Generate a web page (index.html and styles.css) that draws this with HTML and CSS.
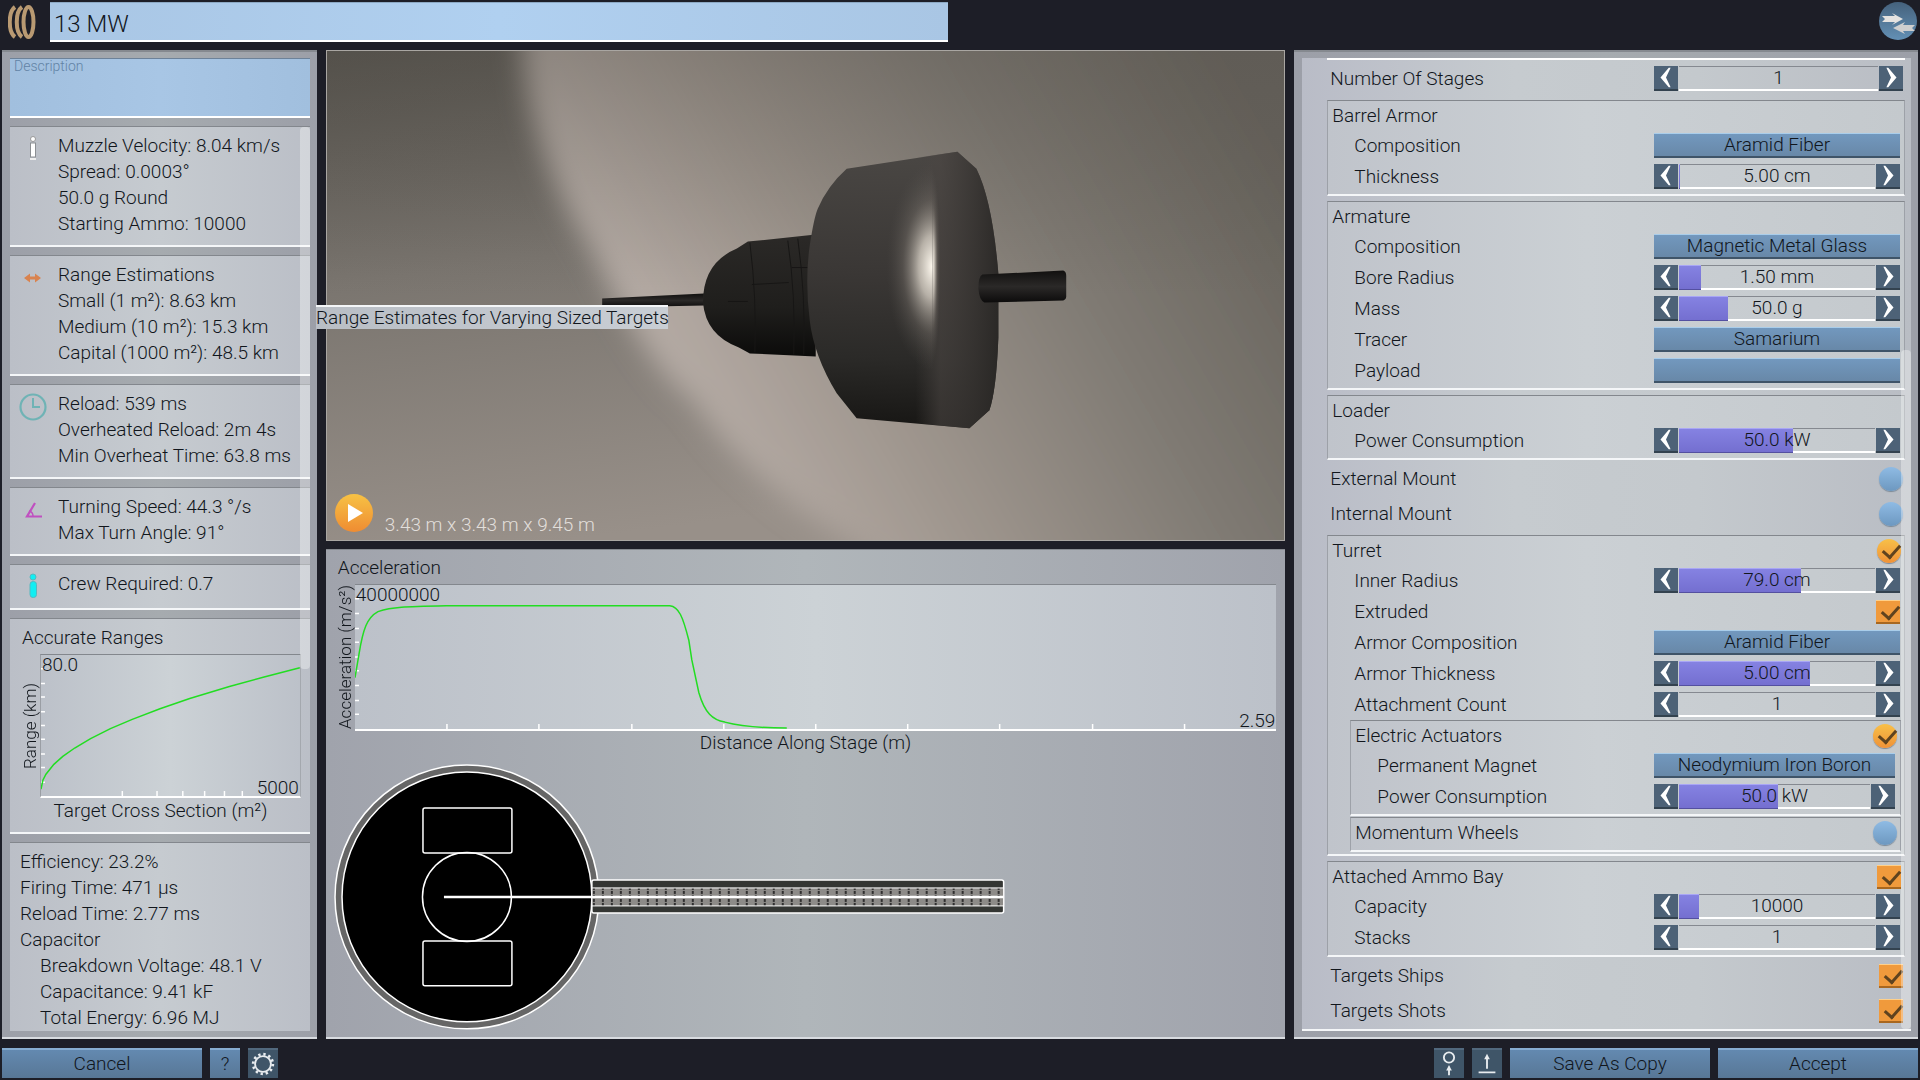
FILE: index.html
```
<!DOCTYPE html>
<html lang="en">
<head>
  <meta charset="utf-8">
  <title>Module Editor</title>
  <link rel="stylesheet" href="styles.css">
</head>
<body>
  <svg width="0" height="0" class="defs" aria-hidden="true">
    <symbol id="prev" viewBox="0 0 24 25"><path d="M15 2 H17 L12 12.500 L17 23 H15 L6 12.500 Z" fill="#fff"/></symbol>
    <symbol id="next" viewBox="0 0 24 25"><path d="M9 2 H7 L12 12.500 L7 23 H9 L18 12.500 Z" fill="#fff"/></symbol>
  </svg>

  <header class="topbar">
    <svg class="logo" viewBox="0 0 28 36" fill="none" stroke="#b99a72">
      <path d="M7 3 C0 8 0 28 7 33" stroke-width="4"/>
      <path d="M14 3 C7 8 7 28 14 33" stroke-width="4"/>
      <ellipse cx="20.500" cy="18" rx="5" ry="15" stroke-width="4"/>
    </svg>
    <input class="name" type="text" value="13 MW" aria-label="Name">
    <button class="swap" aria-label="Swap">
      <svg viewBox="0 0 38 38">
        <path d="M3 14 H16 L13 11 L24 17 L13 23 L16 20 H3 L6 17 Z" fill="#e4e2e0"/>
        <path d="M36 23 H24 L26 20 L14 26 L26 32 L24 29 H36 L33 26 Z" fill="#cfcfcf"/>
      </svg>
    </button>
  </header>

  <main>
    <section class="panel stats">
      <textarea class="description" placeholder="Description" aria-label="Description"></textarea>

      <div class="card">
        <svg class="icon" viewBox="0 0 32 32"><circle cx="17" cy="7" r="2.500" fill="#fff" stroke="#999"/><rect x="14.500" y="11" width="5" height="14" fill="#fff" stroke="#8c8f93"/><path d="M14 27 h6" stroke="#eee" stroke-width="2"/></svg>
        <div>
          <p>Muzzle Velocity: 8.04 km/s</p>
          <p>Spread: 0.0003°</p>
          <p>50.0 g Round</p>
          <p>Starting Ammo: 10000</p>
        </div>
      </div>

      <div class="card">
        <svg class="icon" viewBox="0 0 32 32"><path d="M8 17 L14 12.500 V15.500 H19 V12.500 L25 17 L19 21.500 V18.500 H14 V21.500 Z" fill="#d9834f"/></svg>
        <div>
          <p>Range Estimations</p>
          <p>Small (1 m²): 8.63 km</p>
          <p>Medium (10 m²): 15.3 km</p>
          <p>Capital (1000 m²): 48.5 km</p>
        </div>
        <div class="tooltip" role="tooltip">Range Estimates for Varying Sized Targets</div>
      </div>

      <div class="card">
        <svg class="icon" viewBox="0 0 32 32" fill="none" stroke="#6fb3b5"><circle cx="17" cy="17" r="12.500" stroke-width="2.200"/><path d="M17 8 V17 H24" stroke-width="2"/></svg>
        <div>
          <p>Reload: 539 ms</p>
          <p>Overheated Reload: 2m 4s</p>
          <p>Min Overheat Time: 63.8 ms</p>
        </div>
      </div>

      <div class="card">
        <svg class="icon" viewBox="0 0 32 32" fill="none" stroke="#c050c0"><path d="M19 10 L11 23.500 H26" stroke-width="2.200"/><path d="M13 18 Q17 19 17 23" stroke-width="1.500"/></svg>
        <div>
          <p>Turning Speed: 44.3 °/s</p>
          <p>Max Turn Angle: 91°</p>
        </div>
      </div>

      <div class="card">
        <svg class="icon" viewBox="0 0 32 32" fill="#12eef2" stroke="#55b9c0"><circle cx="17" cy="7" r="3"/><rect x="14" y="11.500" width="6.500" height="16" rx="3"/></svg>
        <div>
          <p>Crew Required: 0.7</p>
        </div>
      </div>

      <div class="card chart-card">
        <h2>Accurate Ranges</h2>
        <div class="chart">
          <span class="y-label">Range (km)</span>
          <div class="plot small">
            <svg viewBox="0 0 261 144" preserveAspectRatio="none">
              <path class="tick" d="M0 14H4 M0 29H4 M0 43H4 M0 58H4 M0 72H4 M0 86H4 M0 101H4 M0 115H4 M0 130H4"/>
              <path class="tick" d="M82 139V144 M117 139V144 M143 139V144 M165 139V144 M185 139V144 M203 139V144"/>
              <polyline class="curve" points="0,137 2,127.600 5,121.800 13,111.700 22,103.600 34,95 50,85.400 70,75.200 92,65.700 120,54.900 150,44.500 190,32.200 225,22.400 261,13"/>
            </svg>
            <span class="max-y">80.0</span>
            <span class="max-x">5000</span>
          </div>
        </div>
        <p class="x-label">Target Cross Section (m²)</p>
      </div>

      <div class="card details">
        <div>
          <p>Efficiency: 23.2%</p>
          <p>Firing Time: 471 µs</p>
          <p>Reload Time: 2.77 ms</p>
          <p>Capacitor</p>
          <p class="sub">Breakdown Voltage: 48.1 V</p>
          <p class="sub">Capacitance: 9.41 kF</p>
          <p class="sub">Total Energy: 6.96 MJ</p>
        </div>
      </div>
      <div class="scrollbar"></div>
    </section>

    <div class="center">
      <section class="view">
        <svg class="scene" viewBox="0 0 960 490" preserveAspectRatio="xMidYMid slice">
          <defs>
            <linearGradient id="wall" x1="0" y1="0" x2="0.250" y2="1">
              <stop offset="0" stop-color="#54514b"/>
              <stop offset="0.450" stop-color="#7a756f"/>
              <stop offset="1" stop-color="#989089"/>
            </linearGradient>
            <linearGradient id="lit" gradientUnits="userSpaceOnUse" x1="330" y1="380" x2="920" y2="40">
              <stop offset="0" stop-color="#bab0aa"/>
              <stop offset="0.300" stop-color="#a0978f"/>
              <stop offset="0.650" stop-color="#7f7a73"/>
              <stop offset="1" stop-color="#66625b"/>
            </linearGradient>
            <linearGradient id="topshade" x1="0" y1="0" x2="0" y2="1">
              <stop offset="0" stop-color="#55514b" stop-opacity="0.350"/>
              <stop offset="0.500" stop-color="#55514b" stop-opacity="0"/>
            </linearGradient>
            <linearGradient id="drum" gradientUnits="userSpaceOnUse" x1="580" y1="100" x2="570" y2="378">
              <stop offset="0" stop-color="#4a4744"/>
              <stop offset="0.450" stop-color="#3a3735"/>
              <stop offset="0.750" stop-color="#2b2a28"/>
              <stop offset="1" stop-color="#171614"/>
            </linearGradient>
            <linearGradient id="rim" gradientUnits="userSpaceOnUse" x1="590" y1="0" x2="674" y2="0">
              <stop offset="0" stop-color="#4a4542" stop-opacity="0"/>
              <stop offset="0.300" stop-color="#4a4542" stop-opacity="0.600"/>
              <stop offset="1" stop-color="#292725" stop-opacity="0.900"/>
            </linearGradient>
            <linearGradient id="neck" x1="0" y1="0" x2="0" y2="1">
              <stop offset="0" stop-color="#2b2927"/>
              <stop offset="0.600" stop-color="#1f1e1c"/>
              <stop offset="1" stop-color="#0b0b0a"/>
            </linearGradient>
            <linearGradient id="stub" x1="0" y1="0" x2="0" y2="1">
              <stop offset="0" stop-color="#11100f"/>
              <stop offset="0.500" stop-color="#2b2928"/>
              <stop offset="1" stop-color="#0c0b0b"/>
            </linearGradient>
            <radialGradient id="shine">
              <stop offset="0" stop-color="#fffaf0"/>
              <stop offset="0.300" stop-color="#d5cec3" stop-opacity="0.800"/>
              <stop offset="0.650" stop-color="#8a837b" stop-opacity="0.300"/>
              <stop offset="1" stop-color="#5a5652" stop-opacity="0"/>
            </radialGradient>
            <filter id="soft"><feGaussianBlur stdDeviation="14"/></filter>
            <clipPath id="left-of-edge"><rect x="480" y="90" width="127" height="300"/></clipPath>
            <clipPath id="right-of-edge"><rect x="607" y="90" width="60" height="300"/></clipPath>
          </defs>
          <rect width="960" height="490" fill="url(#wall)"/>
          <path d="M190 -50 L196 0 C202 90 245 170 262 194 C300 275 345 340 364 347 C420 430 490 470 535 500 L600 560 H1020 V-50 Z" fill="url(#lit)" filter="url(#soft)"/>
          <rect width="960" height="490" fill="url(#topshade)"/>
          <path d="M276 248 L378 243 V255 L276 257 Z" fill="url(#stub)"/>
          <path d="M490 184 L422 191 L411 198 Q377 212 377 252 Q380 285 413 297 L424 303 L490 306 Z" fill="url(#neck)"/>
          <path d="M424 192 Q431 248 429 302 M462 190 Q470 245 468 304 M472 188 Q480 245 478 304 M426 234 L463 232 M402 251 H422 M466 217 H482" fill="none" stroke="#171615" stroke-width="1"/>
          <path d="M484 195 Q488 168 492 158 Q502 135 521 118 L632 101 L651 118 Q667 150 673 223 V287 Q671 340 664 360 L644 378 L531 368 L511 343 Q488 305 484 270 Q479 230 484 195 Z" fill="url(#drum)"/>
          <path d="M590 107 L632 101 L651 118 Q667 150 673 223 V287 Q671 340 664 360 L644 378 L590 373 Z" fill="url(#rim)"/>
          <ellipse cx="607" cy="216" rx="46" ry="104" fill="url(#shine)" clip-path="url(#left-of-edge)"/>
          <ellipse cx="607" cy="216" rx="8" ry="98" fill="url(#shine)" clip-path="url(#right-of-edge)"/>
          <path d="M657 224 L738 220 Q741 221 741 225 V246 Q741 249 738 250 L659 252 Q654 250 653 238 Q653 226 657 224 Z" fill="url(#stub)"/>
        </svg>
        <div class="view-bar">
          <button class="play" aria-label="Play"><svg viewBox="0 0 38 38"><path d="M13 10 L28 19 L13 28 Z" fill="#fff"/></svg></button>
          <span>3.43 m x 3.43 m x 9.45 m</span>
        </div>
      </section>

      <section class="panel graph">
        <h2>Acceleration</h2>
        <div class="chart">
          <span class="y-label">Acceleration (m/s²)</span>
          <div class="plot">
            <svg viewBox="0 0 922 146" preserveAspectRatio="none">
              <path class="tick" d="M0 14H4 M0 29H4 M0 44H4 M0 58H4 M0 73H4 M0 87H4 M0 102H4 M0 117H4 M0 131H4"/>
              <path class="tick" d="M92 141V146 M184 141V146 M277 141V146 M369 141V146 M461 141V146 M553 141V146 M645 141V146 M738 141V146 M830 141V146"/>
              <path class="curve" d="M0 94 L4 70 C8 45 12 33 23 27 C38 22 50 22 98 21 L315 21 C324 22 328 32 334 56 L337 76 L344 109 C350 130 358 137 370 139 C385 143 400 145 432 145"/>
            </svg>
            <span class="max-y">40000000</span>
            <span class="max-x">2.59</span>
          </div>
        </div>
        <p class="x-label">Distance Along Stage (m)</p>
        <svg class="schematic" viewBox="0 0 960 276">
          <defs>
            <pattern id="coils" width="9" height="8" patternUnits="userSpaceOnUse">
              <rect width="9" height="8" fill="#8d8b88"/>
              <path d="M7 0V8" stroke="#111" stroke-width="1.500" stroke-dasharray="3 1"/>
            </pattern>
          </defs>
          <circle cx="141" cy="138" r="132" fill="#666" stroke="#fff" stroke-width="1.500"/>
          <circle cx="141" cy="138" r="125" fill="#000" stroke="#fff" stroke-width="1.500"/>
          <g fill="none" stroke="#fff" stroke-width="1.500">
            <circle cx="141" cy="138" r="44.500"/>
            <rect x="97" y="49" width="89" height="45" rx="2"/>
            <rect x="97" y="182" width="89" height="45" rx="2"/>
          </g>
          <rect x="266" y="121" width="412" height="33" rx="2" fill="#343633" stroke="#fff" stroke-width="1.500"/>
          <rect x="266" y="129" width="412" height="18" fill="url(#coils)" stroke="#fff"/>
          <path d="M118 138 H678" stroke="#fff" stroke-width="2.500"/>
        </svg>
      </section>
    </div>

    <section class="panel options">
      <div class="sheet">
        <div class="list">
          <div class="row tall top">
            <label for="stages">Number Of Stages</label>
            <div class="spin"><button aria-label="Less"><svg><use href="#prev"/></svg></button><div class="track"><input id="stages" value="1"></div><button aria-label="More"><svg><use href="#next"/></svg></button></div>
          </div>

          <div class="group">
            <h3>Barrel Armor</h3>
            <div class="row"><span>Composition</span><button class="pick">Aramid Fiber</button></div>
            <div class="row">
              <label for="thickness">Thickness</label>
              <div class="spin"><button aria-label="Less"><svg><use href="#prev"/></svg></button><div class="track"><div class="fill" style="width: 0.5%"></div><input id="thickness" value="5.00 cm"></div><button aria-label="More"><svg><use href="#next"/></svg></button></div>
            </div>
          </div>

          <div class="group">
            <h3>Armature</h3>
            <div class="row"><span>Composition</span><button class="pick">Magnetic Metal Glass</button></div>
            <div class="row">
              <label for="bore">Bore Radius</label>
              <div class="spin"><button aria-label="Less"><svg><use href="#prev"/></svg></button><div class="track"><div class="fill" style="width: 11%"></div><input id="bore" value="1.50 mm"></div><button aria-label="More"><svg><use href="#next"/></svg></button></div>
            </div>
            <div class="row">
              <label for="mass">Mass</label>
              <div class="spin"><button aria-label="Less"><svg><use href="#prev"/></svg></button><div class="track"><div class="fill" style="width: 25%"></div><input id="mass" value="50.0 g"></div><button aria-label="More"><svg><use href="#next"/></svg></button></div>
            </div>
            <div class="row"><span>Tracer</span><button class="pick">Samarium</button></div>
            <div class="row"><span>Payload</span><button class="pick" aria-label="Payload"></button></div>
          </div>

          <div class="group">
            <h3>Loader</h3>
            <div class="row">
              <label for="loader">Power Consumption</label>
              <div class="spin"><button aria-label="Less"><svg><use href="#prev"/></svg></button><div class="track"><div class="fill" style="width: 58%"></div><input id="loader" value="50.0 kW"></div><button aria-label="More"><svg><use href="#next"/></svg></button></div>
            </div>
          </div>

          <div class="mounts">
            <div class="row tall"><label for="external">External Mount</label><input id="external" type="radio" name="mount"></div>
            <div class="row tall"><label for="internal">Internal Mount</label><input id="internal" type="radio" name="mount"></div>
          </div>

          <div class="group">
            <div class="head"><label for="turret">Turret</label><input id="turret" type="radio" name="mount" checked></div>
            <div class="row">
              <label for="inner">Inner Radius</label>
              <div class="spin"><button aria-label="Less"><svg><use href="#prev"/></svg></button><div class="track"><div class="fill" style="width: 62%"></div><input id="inner" value="79.0 cm"></div><button aria-label="More"><svg><use href="#next"/></svg></button></div>
            </div>
            <div class="row"><label for="extruded">Extruded</label><input id="extruded" type="checkbox" checked></div>
            <div class="row"><span>Armor Composition</span><button class="pick">Aramid Fiber</button></div>
            <div class="row">
              <label for="armor">Armor Thickness</label>
              <div class="spin"><button aria-label="Less"><svg><use href="#prev"/></svg></button><div class="track"><div class="fill" style="width: 67%"></div><input id="armor" value="5.00 cm"></div><button aria-label="More"><svg><use href="#next"/></svg></button></div>
            </div>
            <div class="row">
              <label for="attach">Attachment Count</label>
              <div class="spin"><button aria-label="Less"><svg><use href="#prev"/></svg></button><div class="track"><input id="attach" value="1"></div><button aria-label="More"><svg><use href="#next"/></svg></button></div>
            </div>

            <div class="group nested">
              <div class="head"><label for="electric">Electric Actuators</label><input id="electric" type="radio" name="drive" checked></div>
              <div class="row"><span>Permanent Magnet</span><button class="pick">Neodymium Iron Boron</button></div>
              <div class="row">
                <label for="actuator">Power Consumption</label>
                <div class="spin"><button aria-label="Less"><svg><use href="#prev"/></svg></button><div class="track"><div class="fill" style="width: 52%"></div><input id="actuator" value="50.0 kW"></div><button aria-label="More"><svg><use href="#next"/></svg></button></div>
              </div>
            </div>
            <div class="group nested">
              <div class="head"><label for="wheels">Momentum Wheels</label><input id="wheels" type="radio" name="drive"></div>
            </div>
          </div>

          <div class="group">
            <div class="head"><label for="ammo">Attached Ammo Bay</label><input id="ammo" type="checkbox" checked></div>
            <div class="row">
              <label for="capacity">Capacity</label>
              <div class="spin"><button aria-label="Less"><svg><use href="#prev"/></svg></button><div class="track"><div class="fill" style="width: 10%"></div><input id="capacity" value="10000"></div><button aria-label="More"><svg><use href="#next"/></svg></button></div>
            </div>
            <div class="row">
              <label for="stacks">Stacks</label>
              <div class="spin"><button aria-label="Less"><svg><use href="#prev"/></svg></button><div class="track"><input id="stacks" value="1"></div><button aria-label="More"><svg><use href="#next"/></svg></button></div>
            </div>
          </div>

          <div class="targets">
            <div class="row tall"><label for="ships">Targets Ships</label><input id="ships" type="checkbox" checked></div>
            <div class="row tall"><label for="shots">Targets Shots</label><input id="shots" type="checkbox" checked></div>
          </div>
        </div>
        <div class="scrollbar"></div>
      </div>
    </section>
  </main>

  <footer>
    <button class="cancel">Cancel</button>
    <button class="square">?</button>
    <button class="square dark" aria-label="Settings">
      <svg viewBox="0 0 30 30" fill="none" stroke="#e8ecef">
        <circle cx="15" cy="15" r="8.500" stroke-width="2"/>
        <circle cx="15" cy="15" r="10.500" stroke-width="3" stroke-dasharray="2.500 3"/>
      </svg>
    </button>
    <span class="spacer"></span>
    <button class="square dark" aria-label="Attach">
      <svg viewBox="0 0 30 30" fill="none" stroke="#e8ecef" stroke-width="2"><circle cx="15" cy="8" r="5.500"/><path d="M15 27 V18"/><path d="M12 22 L15 16 L18 22 Z" fill="#e8ecef" stroke="none"/></svg>
    </button>
    <button class="square dark" aria-label="Export">
      <svg viewBox="0 0 30 30" fill="none" stroke="#e8ecef" stroke-width="2"><path d="M15 20 V8 M6 24 H24"/><path d="M12 10 L15 4 L18 10 Z" fill="#e8ecef" stroke="none"/></svg>
    </button>
    <button class="copy">Save As Copy</button>
    <button class="accept">Accept</button>
  </footer>
</body>
</html>
```
FILE: styles.css
```
* { box-sizing: border-box; }
body {
  margin: 0;
  min-height: 100vh;
  display: flex;
  flex-direction: column;
  background: #1d1e27;
  color: #11161c;
  font: 300 19px/26px Roboto, sans-serif;
}
button, input, textarea { font: inherit; color: inherit; margin: 0; padding: 0; border: 0; border-radius: 0; }
button { cursor: pointer; }
h2, h3, p { margin: 0; font-size: inherit; font-weight: inherit; }
.defs { position: absolute; }

/* top bar */
.topbar { display: flex; align-items: flex-start; height: 50px; padding-top: 2px; }
.logo { width: 28px; height: 36px; margin: 2px 14px 0 8px; }
.name {
  width: 898px;
  height: 40px;
  padding: 4px 0 0 4px;
  font-size: 24px;
  background: linear-gradient(to right, #a9c6e4, #b0d0f0 50%, #a9c6e4);
  border-top: 1px solid #8da9c4;
  border-bottom: 2px solid #fff;
}
.swap {
  width: 38px;
  height: 38px;
  margin-left: auto;
  margin-right: 3px;
  border-radius: 50%;
  background: linear-gradient(#45617c, #6390b5);
}
.swap svg { display: block; }

/* columns */
main {
  flex: 1;
  display: grid;
  grid-template-columns: 315fr 960fr 624fr;
  column-gap: 9px;
  padding: 0 2px;
}
.panel {
  border-top: 2px solid #85898f;
  border-bottom: 2px solid #d8dbe0;
  background: linear-gradient(to right, #9c9fa8, #a6abaf 50%, #9c9fa8);
}
.scrollbar { position: absolute; width: 10px; background: rgba(255, 255, 255, 0.35); border-radius: 4px; }

/* left column */
.stats {
  position: relative;
  display: flex;
  flex-direction: column;
  gap: 8px;
  padding: 6px 7px 6px 8px;
}
.stats .scrollbar { right: 7px; top: 75px; height: 542px; }
.description {
  height: 60px;
  padding: 0 4px;
  resize: none;
  font-size: 14px;
  line-height: 14px;
  background: linear-gradient(to right, #a1bfde, #a8c6e5 50%, #a1bfde);
  border-top: 1px solid #6d8299;
  border-bottom: 2px solid #fff;
}
.description::placeholder { color: #6283a5; }
.card {
  position: relative;
  display: flex;
  min-height: 46px;
  padding: 6px 4px 8px 6px;
  background: linear-gradient(to right, #bbbfc7, #c6cbd0 50%, #bbbfc7);
  border-top: 1px solid #83878d;
  border-bottom: 2px solid #f4f6f8;
}
.icon { width: 32px; height: 32px; margin: -1px 10px -4px 0; }
.tooltip {
  position: absolute;
  z-index: 2;
  left: 306px;
  top: 49px;
  height: 24px;
  width: 352px;
  line-height: 22px;
  white-space: nowrap;
  background: linear-gradient(to right, #b9bec5, #c9ced4);
  border-top: 2px solid #f4f6f8;
}
.chart-card { flex-direction: column; padding: 6px 9px 8px 10px; }
.chart-card h2 { padding: 0 2px 3px; }
.chart { display: flex; }
.y-label {
  width: 20px;
  font-size: 17px;
  line-height: 20px;
  text-align: center;
  white-space: nowrap;
  writing-mode: vertical-rl;
  transform: rotate(180deg);
}
.plot {
  position: relative;
  flex: 1;
  height: 147px;
  line-height: 20px;
  border-top: 1px solid #83878d;
  border-bottom: 2px solid #fff;
  background: linear-gradient(to right, #bcc1c9, #ccd2d6 50%, #bcc1c9);
}
.plot.small { height: 144px; border-left: 1px solid #9a9ea4; border-right: 1px solid #a4a8ae; }
.plot svg { display: block; width: 100%; height: 100%; }
.tick { stroke: #fff; stroke-width: 1.5; fill: none; }
.curve { stroke: #22dd22; stroke-width: 1.5; fill: none; }
.max-y { position: absolute; left: 1px; top: 0; }
.max-x { position: absolute; right: 1px; bottom: -2px; }
.x-label { text-align: center; }
.details { flex: 1; padding: 6px 4px 0 10px; border-bottom: 0; }
.sub { padding-left: 20px; }

/* centre column */
.center { display: grid; grid-template-rows: 491fr 490fr; row-gap: 8px; }
.view { position: relative; display: flex; align-items: flex-end; border: 1px solid #a9a6a2; overflow: hidden; }
.scene { position: absolute; width: 100%; height: 100%; }
.view-bar { position: relative; display: flex; align-items: flex-end; gap: 12px; padding: 0 0 8px 8px; color: #e2dfdb; }
.view-bar span { line-height: 14px; }
.play {
  width: 38px;
  height: 38px;
  border-radius: 50%;
  background: linear-gradient(#f7c244, #ef8c32);
}
.play svg { display: block; }
.graph {
  padding: 5px 9px 0;
  border-top-width: 1px;
  background: linear-gradient(to right, #a0a3ac, #b0b6ba 50%, #a0a3ac);
}
.graph h2 { padding: 0 3px 3px; }
.graph .y-label { height: 147px; }
.graph .x-label { line-height: 24px; }
.schematic { display: block; width: calc(100% + 18px); margin: 4px -9px 0; }

/* right column */
.options { padding: 6px 7px 6px 8px; }
.sheet {
  position: relative;
  height: 100%;
  padding: 0 6px 0 25px;
  background: linear-gradient(to right, #b9bcc7, #c6cbcf 35%, #c4c9cd 65%, #b9bdc4);
  border-bottom: 2px solid #f4f6f8;
}
.sheet .scrollbar { right: 0; top: 292px; bottom: 0; }
.row { display: flex; align-items: center; justify-content: space-between; height: 31px; }
.row.tall { height: 35px; padding: 0 2px 0 3px; }
.row.top { height: 42px; padding-bottom: 3px; border-top: 2px solid #fff; }
.group {
  margin-bottom: 5px;
  padding-bottom: 2px;
  background: linear-gradient(to right, #c0c4cb, #cbd0d4 45%, #c4c9cd);
  border: 1px solid #9da1a8;
  border-top-color: #83878d;
  border-bottom: 2px solid #f4f6f8;
}
.group h3, .head { height: 29px; padding-left: 4px; line-height: 30px; }
.group .row { padding: 0 4px 0 26px; }
.head { display: flex; align-items: center; justify-content: space-between; padding-right: 3px; }
.nested { margin: 0 3px 1px 22px; }
.group .nested .row { padding-right: 5px; }
.nested .head:only-child { height: 30px; }
.nested:last-child { margin-bottom: 0; }
.mounts { padding-bottom: 4px; margin-top: -4px; }
.targets { margin-top: -4px; }
.pick {
  width: 246px;
  height: 25px;
  line-height: 22px;
  background: linear-gradient(#7298be, #6888a8);
  border-top: 1px solid #a9cdea;
  border-bottom: 2px solid #3f5468;
}
.spin { display: flex; width: 246px; height: 25px; }
.row.top .spin { width: 249px; }
.nested .pick, .nested .spin { width: 241px; }
.spin button { width: 24px; background: #4d6277; border-bottom: 2px solid #33424f; }
.spin button svg { display: block; width: 24px; height: 23px; }
.track { position: relative; flex: 1; margin: 0 1px; border-top: 1px solid #858990; border-bottom: 2px solid #fff; }
.track input { position: relative; display: block; width: 100%; height: 22px; text-align: center; background: none; }
.fill {
  position: absolute;
  top: -1px;
  bottom: -2px;
  left: 0;
  background: linear-gradient(#8582e2, #746fd0);
  border-top: 1px solid #a9a6f5;
  border-bottom: 1px solid #5450a0;
}
input[type="radio"], input[type="checkbox"] { appearance: none; width: 24px; height: 24px; flex: none; }
input[type="radio"] {
  border-radius: 50%;
  background: linear-gradient(#8fbbe4, #6d98c0);
  box-shadow: 0 1px 1px #7a8896;
}
input[type="checkbox"] { background: #f09a3c; border-top: 1px solid #ffd08a; border-bottom: 2px solid #a8671f; }
input[type="radio"]:checked { background: linear-gradient(#f8c048, #ef9238); }
input:checked::after {
  content: "";
  display: block;
  width: 8px;
  height: 14px;
  margin: 2px 0 0 9px;
  border: solid #5f431f;
  border-width: 0 3px 3px 0;
  transform: rotate(42deg);
}
input[type="checkbox"]:checked::after { margin-top: 1px; }

/* bottom bar */
footer { display: flex; gap: 8px; padding: 9px 2px 2px; }
footer button {
  height: 30px;
  background: linear-gradient(#6389b0, #587796);
  border-top: 2px solid #86acd0;
}
footer .square { width: 30px; }
footer .dark { background: #3f5568; border-top-color: #51687d; }
footer svg { display: block; width: 30px; height: 28px; }
.cancel, .copy, .accept { width: 200px; }
.spacer { flex: 1; }
```
